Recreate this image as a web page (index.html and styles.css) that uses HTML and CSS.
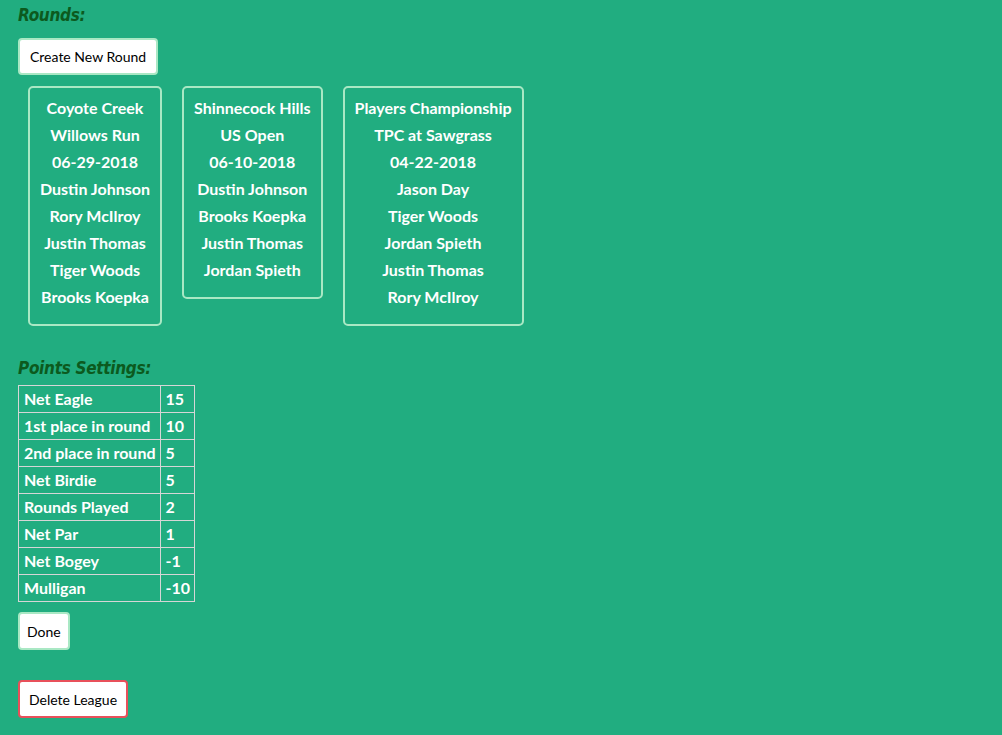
FILE: index.html
```html
<!DOCTYPE html>
<html>
<head>
<meta charset="utf-8">
<link rel="stylesheet" href="styles.css">
</head>
<body>
<div class="page">
  <h2 class="section-title">Rounds:</h2>
  <button class="btn">Create New Round</button>
  <div class="rounds">
    <div class="round-card">
      <p>Coyote Creek</p>
      <p>Willows Run</p>
      <p>06-29-2018</p>
      <p>Dustin Johnson</p>
      <p>Rory McIlroy</p>
      <p>Justin Thomas</p>
      <p>Tiger Woods</p>
      <p>Brooks Koepka</p>
    </div>
    <div class="round-card">
      <p>Shinnecock Hills</p>
      <p>US Open</p>
      <p>06-10-2018</p>
      <p>Dustin Johnson</p>
      <p>Brooks Koepka</p>
      <p>Justin Thomas</p>
      <p>Jordan Spieth</p>
    </div>
    <div class="round-card">
      <p>Players Championship</p>
      <p>TPC at Sawgrass</p>
      <p>04-22-2018</p>
      <p>Jason Day</p>
      <p>Tiger Woods</p>
      <p>Jordan Spieth</p>
      <p>Justin Thomas</p>
      <p>Rory McIlroy</p>
    </div>
  </div>
  <h2 class="section-title points-title">Points Settings:</h2>
  <table class="points">
    <tr><td>Net Eagle</td><td>15</td></tr>
    <tr><td>1st place in round</td><td>10</td></tr>
    <tr><td>2nd place in round</td><td>5</td></tr>
    <tr><td>Net Birdie</td><td>5</td></tr>
    <tr><td>Rounds Played</td><td>2</td></tr>
    <tr><td>Net Par</td><td>1</td></tr>
    <tr><td>Net Bogey</td><td>-1</td></tr>
    <tr><td>Mulligan</td><td>-10</td></tr>
  </table>
  <button class="btn done">Done</button>
  <button class="btn danger">Delete League</button>
</div>
</body>
</html>
```

FILE: styles.css
```css
html, body {
  margin: 0;
  padding: 0;
  background: #21ad80;
  height: 100%;
}
body {
  font-family: "Lato", "Nunito", sans-serif;
  color: #fff;
}
.page {
  padding: 4px 18px 0 18px;
  display: flex;
  flex-direction: column;
  align-items: flex-start;
}
.section-title {
  margin: 0;
  font-family: "DejaVu Sans Condensed", "DejaVu Sans", sans-serif;
  font-style: italic;
  font-weight: bold;
  font-size: 17px;
  line-height: 22px;
  color: #0c5a1e;
  letter-spacing: -0.3px;
}
.btn {
  font-family: "Lato", sans-serif;
  font-size: 14px;
  color: #000;
  background: #fff;
  border: 2px solid #a9e8c4;
  border-radius: 4px;
  padding: 0 10px;
  height: 37px;
  margin-top: 12px;
  cursor: pointer;
}
.rounds {
  display: flex;
  align-items: flex-start;
  gap: 20px;
  margin-left: 10px;
  margin-top: 11px;
}
.round-card {
  border: 2px solid #a9e8c4;
  border-radius: 5px;
  padding: 6px 10px 14px 10px;
  text-align: center;
  font-weight: 700;
  font-size: 16px;
}
.round-card p {
  margin: 0;
  line-height: 27px;
  white-space: nowrap;
}
.points-title {
  margin-top: 31px;
}
.points {
  border-collapse: collapse;
  margin-top: 6px;
  font-weight: 700;
  font-size: 16px;
}
.points td {
  border: 1px solid #d6d6d6;
  padding: 0 4px 0 5px;
  height: 26px;
  line-height: 26px;
  white-space: nowrap;
}
.done {
  margin-top: 10px;
  height: 38px;
  padding: 0 7px;
}
.danger {
  margin-top: 30px;
  height: 38px;
  padding: 0 9px;
  border-color: #e8505a;
}
```
